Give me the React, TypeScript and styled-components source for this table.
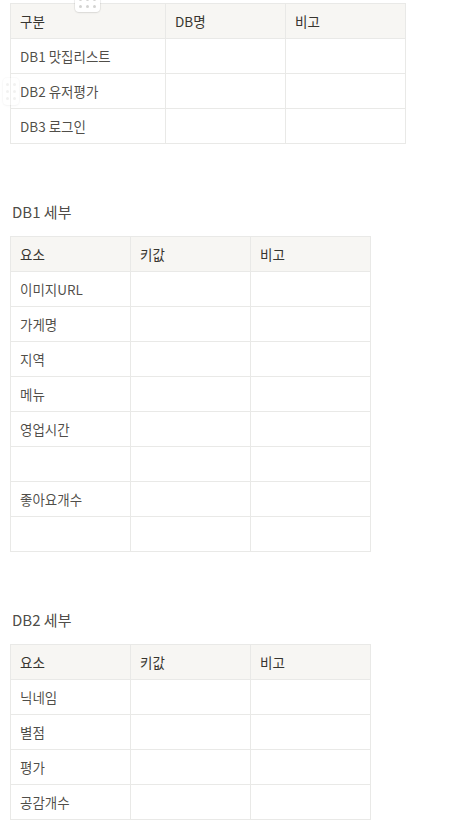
import styled, { createGlobalStyle } from 'styled-components';

const GlobalStyle = createGlobalStyle`
  body {
    margin: 0;
    background: #fff;
    font-family: 'Noto Sans CJK KR', 'Noto Sans', sans-serif;
    color: rgb(55, 53, 47);
  }
`;

const Page = styled.main`
  position: relative;
  padding: 3px 0 0 10px;
`;

const Block = styled.section<{ $gap: number }>`
  position: relative;
  margin-top: ${(p) => p.$gap}px;
`;

const Heading = styled.h3`
  margin: 0 0 12px 2px;
  font-size: 15px;
  font-weight: 400;
  line-height: 24px;
  color: rgba(55, 53, 47, 0.9);
`;

const Table = styled.table`
  border-collapse: collapse;
  table-layout: fixed;
  font-size: 13.5px;
`;

const Cell = styled.td<{ $width: number; $head?: boolean }>`
  width: ${(p) => p.$width}px;
  height: 35px;
  padding: 0 9px;
  box-sizing: border-box;
  border: 1px solid #e9e9e7;
  background: ${(p) => (p.$head ? '#f7f6f3' : '#fff')};
  color: ${(p) => (p.$head ? 'rgb(55, 53, 47)' : 'rgba(55, 53, 47, 0.88)')};
  font-weight: 400;
  vertical-align: middle;
  white-space: nowrap;
`;

const Handle = styled.div<{ $vertical?: boolean }>`
  position: absolute;
  display: grid;
  grid-template-columns: repeat(${(p) => (p.$vertical ? 2 : 3)}, 3px);
  gap: 4px;
  align-content: center;
  justify-content: center;
  background: #fff;
  border-radius: 4px;
  box-shadow: 0 0 0 1px rgba(15, 15, 15, 0.05), 0 1px 2px rgba(15, 15, 15, 0.08);
  opacity: ${(p) => (p.$vertical ? 0.3 : 1)};
  span {
    width: 3px;
    height: 3px;
    border-radius: 50%;
    background: rgba(55, 53, 47, 0.22);
  }
`;

type Row = string[];

function DataTable({ widths, head, rows }: { widths: number[]; head: Row; rows: Row[] }) {
  return (
    <Table>
      <tbody>
        <tr>
          {head.map((h, i) => (
            <Cell key={i} $width={widths[i]} $head>
              {h}
            </Cell>
          ))}
        </tr>
        {rows.map((r, ri) => (
          <tr key={ri}>
            {r.map((c, i) => (
              <Cell key={i} $width={widths[i]}>
                {c}
              </Cell>
            ))}
          </tr>
        ))}
      </tbody>
    </Table>
  );
}

const dots = (n: number) => Array.from({ length: n }, (_, i) => <span key={i} />);

export default function App() {
  return (
    <>
      <GlobalStyle />
      <Page>
        <Handle style={{ left: 75, top: -6, width: 25, height: 18 }}>{dots(6)}</Handle>
        <Handle $vertical style={{ left: 3, top: 78, width: 16, height: 27 }}>
          {dots(6)}
        </Handle>
        <DataTable
          widths={[155, 120, 120]}
          head={['구분', 'DB명', '비고']}
          rows={[
            ['DB1 맛집리스트', '', ''],
            ['DB2 유저평가', '', ''],
            ['DB3 로그인', '', ''],
          ]}
        />
        <Block $gap={56}>
          <Heading>DB1 세부</Heading>
          <DataTable
            widths={[120, 120, 120]}
            head={['요소', '키값', '비고']}
            rows={[
              ['이미지URL', '', ''],
              ['가게명', '', ''],
              ['지역', '', ''],
              ['메뉴', '', ''],
              ['영업시간', '', ''],
              ['', '', ''],
              ['좋아요개수', '', ''],
              ['', '', ''],
            ]}
          />
        </Block>
        <Block $gap={56}>
          <Heading>DB2 세부</Heading>
          <DataTable
            widths={[120, 120, 120]}
            head={['요소', '키값', '비고']}
            rows={[
              ['닉네임', '', ''],
              ['별점', '', ''],
              ['평가', '', ''],
              ['공감개수', '', ''],
            ]}
          />
        </Block>
      </Page>
    </>
  );
}
